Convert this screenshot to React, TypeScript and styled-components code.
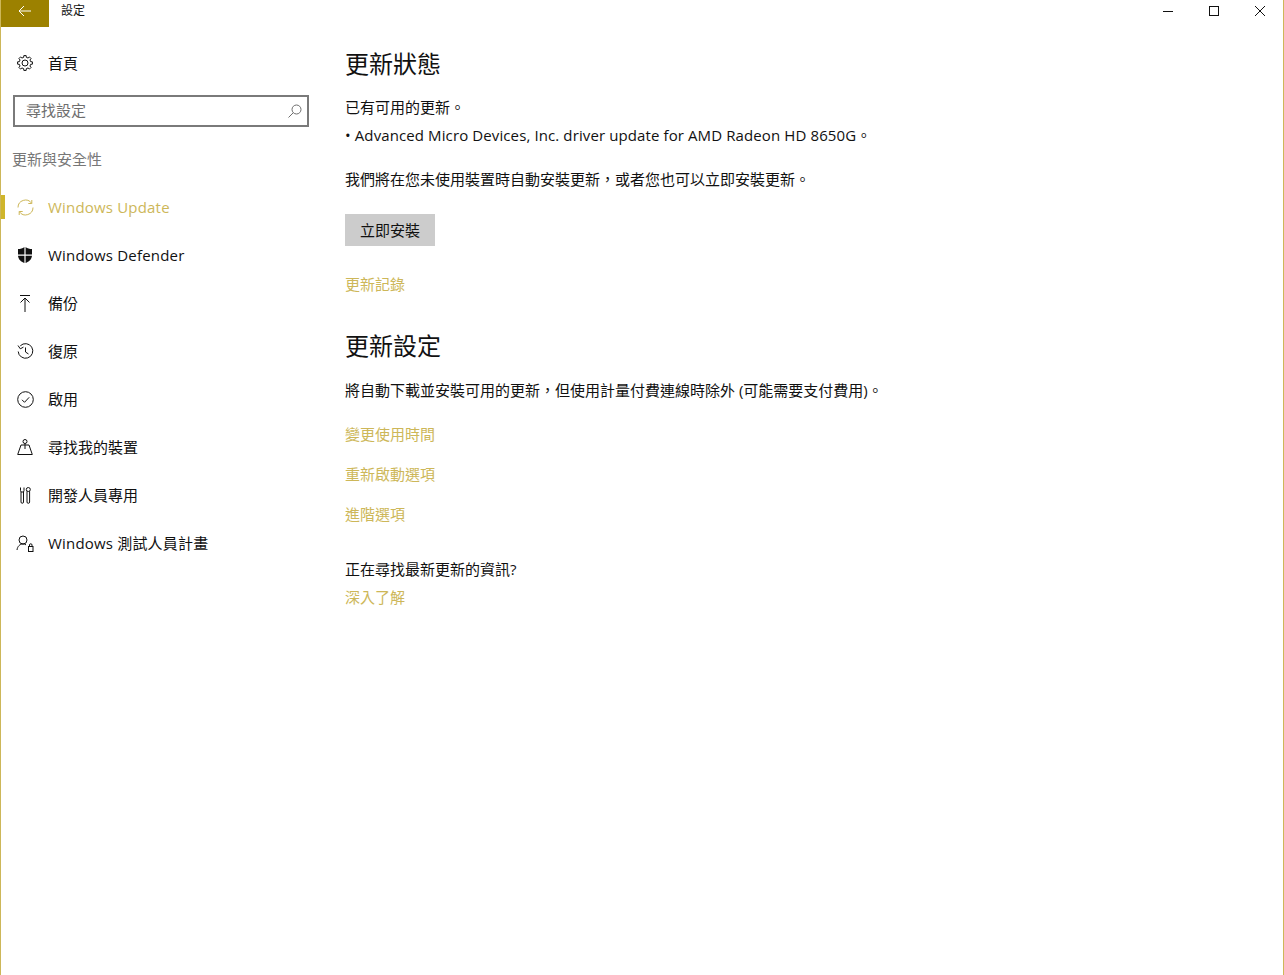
import React from "react";
import styled, { createGlobalStyle } from "styled-components";

const GlobalStyle = createGlobalStyle`
  html, body {
    margin: 0;
    padding: 0;
    background: #fff;
  }
  body {
    font-family: "Open Sans", "Noto Sans CJK TC", sans-serif;
    color: #111;
  }
`;

const ACCENT = "#cdb759";

const Window = styled.div`
  width: 1284px;
  height: 975px;
  box-sizing: border-box;
  border-left: 1px solid ${ACCENT};
  border-right: 1px solid ${ACCENT};
  overflow: hidden;
  display: flex;
  flex-direction: column;
`;

const TitleBar = styled.div`
  height: 27px;
  display: flex;
  align-items: flex-start;
`;

const BackButton = styled.div`
  width: 48px;
  height: 27px;
  background: #9c8100;
  display: flex;
  align-items: center;
  justify-content: center;
  padding-bottom: 5px;
  box-sizing: border-box;
`;

const TitleText = styled.div`
  margin-left: 12px;
  font-size: 12px;
  line-height: 22px;
  flex: 1;
`;

const WindowControls = styled.div`
  display: flex;
  height: 21px;
`;

const ControlButton = styled.div`
  width: 46px;
  display: flex;
  align-items: center;
  justify-content: center;
`;

const Body = styled.div`
  display: flex;
  flex: 1;
`;

const Sidebar = styled.nav`
  width: 344px;
  flex-shrink: 0;
`;

const HomeRow = styled.div`
  height: 48px;
  margin-top: 12px;
  display: flex;
  align-items: center;
  font-size: 15px;
`;

const IconSlot = styled.span`
  width: 48px;
  margin-right: -1px;
  display: flex;
  align-items: center;
  justify-content: center;
  flex-shrink: 0;
`;

const Label = styled.span<{ $raised?: boolean; $spaced?: boolean }>`
  padding-bottom: ${(p) => (p.$raised ? 2 : 0)}px;
  letter-spacing: ${(p) => (p.$spaced ? 0.19 : 0)}px;
`;

const SearchBox = styled.div`
  width: 296px;
  height: 32px;
  margin: 8px 0 0 12px;
  box-sizing: border-box;
  border: 2px solid #7a7a7a;
  display: flex;
  align-items: center;
  justify-content: space-between;
  padding: 0 5px 0 11px;
  font-size: 15px;
  color: #6e6e6e;
`;

const SearchText = styled.span`
  padding-bottom: 4px;
`;

const GroupLabel = styled.div`
  margin: 20px 0 0 11px;
  font-size: 15px;
  line-height: 24px;
  color: #777;
`;

const NavList = styled.div`
  margin-top: 12px;
  display: flex;
  flex-direction: column;
`;

const NavItem = styled.div<{ $active?: boolean }>`
  height: 48px;
  display: flex;
  align-items: center;
  position: relative;
  font-size: 15px;
  color: ${(p) => (p.$active ? ACCENT : "#111")};
  ${(p) =>
    p.$active &&
    `&::before {
      content: "";
      position: absolute;
      left: 0;
      top: 12px;
      width: 4px;
      height: 24px;
      background: #cfb52b;
    }`}
`;

const Content = styled.main`
  display: flex;
  flex-direction: column;
  align-items: flex-start;
  padding-top: 17px;
`;

const Heading = styled.h2<{ $top?: number }>`
  margin: ${(p) => p.$top ?? 0}px 0 0;
  font-size: 24px;
  font-weight: 400;
  line-height: 40px;
`;

const Text = styled.p<{ $top: number }>`
  margin: ${(p) => p.$top}px 0 0;
  font-size: 15px;
  line-height: 20px;
  white-space: nowrap;
`;

const BulletText = styled(Text)`
  letter-spacing: 0.11px;
`;

const InstallButton = styled.div`
  width: 90px;
  height: 32px;
  margin-top: 25px;
  padding-bottom: 2px;
  box-sizing: border-box;
  background: #cccccc;
  display: flex;
  align-items: center;
  justify-content: center;
  font-size: 15px;
`;

const LinkText = styled.div<{ $top: number }>`
  margin-top: ${(p) => p.$top}px;
  font-size: 15px;
  line-height: 20px;
  color: ${ACCENT};
`;

const Stroke = styled.svg.attrs({
  fill: "none",
  stroke: "currentColor",
  strokeWidth: 1,
})`
  display: block;
`;

// outline of the settings cog: eight flat teeth round a centre at 8,8
const gearPath = (() => {
  const teeth = 8;
  const pts: string[] = [];
  for (let i = 0; i < teeth; i++) {
    const a = (i / teeth) * Math.PI * 2;
    const step = (Math.PI * 2) / teeth;
    [
      [a - step * 0.2, 7.5],
      [a + step * 0.2, 7.5],
      [a + step * 0.3, 5.8],
      [a + step * 0.7, 5.8],
    ].forEach(([t, r]) => {
      pts.push(`${(8 + r * Math.sin(t)).toFixed(2)} ${(8 - r * Math.cos(t)).toFixed(2)}`);
    });
  }
  return `M${pts.join("L")}Z`;
})();

const navItems: {
  label: string;
  icon: React.ReactNode;
  active?: boolean;
  raised?: boolean;
  spaced?: boolean;
}[] = [
  {
    label: "Windows Update",
    active: true,
    spaced: true,
    icon: (
      <Stroke width="17" height="17" viewBox="0 0 17 17">
        <path d="M1 8.500A7.500 7.500 0 0 1 14.600 4.200M16 8.500A7.500 7.500 0 0 1 2.400 12.800" />
        <path d="M14.800 1v3.500h-3.500M2.200 16v-3.500h3.500" />
      </Stroke>
    ),
  },
  {
    label: "Windows Defender",
    spaced: true,
    icon: (
      <svg width="16" height="16" viewBox="0 0 16 16" fill="#111">
        <path d="M8.600 0c1.800 1.400 3.900 2 6.400 2v5.600H8.600zM7.400 0v7.600H1V2c2.500 0 4.600-.6 6.400-2zM1 8.800h6.400V16C4 14.800 1.400 12.600 1 8.800zM8.600 8.800H15C14.600 12.600 12 14.800 8.600 16z" />
      </svg>
    ),
  },
  {
    label: "備份",
    raised: true,
    icon: (
      <Stroke width="12" height="17" viewBox="0 0 12 17">
        <path d="M1 .500h10M6 17V3M1.500 7.500L6 3l4.500 4.500" />
      </Stroke>
    ),
  },
  {
    label: "復原",
    raised: true,
    icon: (
      <Stroke width="17" height="17" viewBox="0 0 17 17">
        <path d="M3.300 2.800A7.300 7.300 0 1 1 1.200 8.500" />
        <path d="M1 2.500l2.300 3.300 3.200-1.700M8.500 4.500v4.500l3 2" />
      </Stroke>
    ),
  },
  {
    label: "啟用",
    raised: true,
    icon: (
      <Stroke width="17" height="17" viewBox="0 0 17 17">
        <circle cx="8.500" cy="8.500" r="7.800" />
        <path d="M5 8.800l2.500 2.500 4.700-5" />
      </Stroke>
    ),
  },
  {
    label: "尋找我的裝置",
    raised: true,
    icon: (
      <Stroke width="16" height="16" viewBox="0 0 16 16">
        <circle cx="8" cy="2.500" r="2" />
        <path d="M8 4.500V10M4 6h8l3.300 9.500H.7z" />
      </Stroke>
    ),
  },
  {
    label: "開發人員專用",
    raised: true,
    icon: (
      <Stroke width="11" height="17" viewBox="0 0 11 17">
        <path d="M.5.500v3L1 5h2.500l.5-1.500v-3M1 5v10a1.250 1.250 0 0 0 2.500 0V5" />
        <circle cx="8.300" cy="2.500" r="2" />
        <path d="M7 4.200V15a1.300 1.300 0 0 0 2.600 0V4.200" />
      </Stroke>
    ),
  },
  {
    label: "Windows 測試人員計畫",
    raised: true,
    spaced: true,
    icon: (
      <Stroke width="22" height="17" viewBox="0 0 22 17">
        <circle cx="9" cy="5" r="4" />
        <path d="M3 15c.4-3.500 2.700-6 6-6 1 0 2 .2 3 .8" />
        <rect x="14.500" y="11.500" width="4.500" height="5" />
        <path d="M15.500 11.500V10a1.250 1.250 0 0 1 2.500 0v1.500" />
      </Stroke>
    ),
  },
];

export default function App() {
  return (
    <>
      <GlobalStyle />
      <Window>
        <TitleBar>
          <BackButton>
            <svg width="14" height="12" viewBox="0 0 14 12" fill="none" stroke="#fff" strokeWidth="1">
              <path d="M13 6H1M6 1L1 6l5 5" />
            </svg>
          </BackButton>
          <TitleText>設定</TitleText>
          <WindowControls>
            <ControlButton>
              <svg width="10" height="10" viewBox="0 0 10 10" stroke="#111" strokeWidth="1">
                <path d="M0 5.500h10" />
              </svg>
            </ControlButton>
            <ControlButton>
              <svg width="10" height="10" viewBox="0 0 10 10" fill="none" stroke="#111" strokeWidth="1">
                <rect x=".5" y=".5" width="9" height="9" />
              </svg>
            </ControlButton>
            <ControlButton>
              <svg width="10" height="10" viewBox="0 0 10 10" stroke="#111" strokeWidth="1">
                <path d="M0 0l10 10M10 0L0 10" />
              </svg>
            </ControlButton>
          </WindowControls>
        </TitleBar>
        <Body>
          <Sidebar>
            <HomeRow>
              <IconSlot>
                <Stroke width="16" height="16" viewBox="0 0 16 16">
                  <path d={gearPath} />
                  <circle cx="8" cy="8" r="3" />
                </Stroke>
              </IconSlot>
              <Label $raised>首頁</Label>
            </HomeRow>
            <SearchBox>
              <SearchText>尋找設定</SearchText>
              <svg width="14" height="14" viewBox="0 0 14 14" fill="none" stroke="#6e6e6e" strokeWidth="1">
                <circle cx="8.500" cy="5.500" r="4.500" />
                <path d="M5.300 8.700L.5 13.500" />
              </svg>
            </SearchBox>
            <GroupLabel>更新與安全性</GroupLabel>
            <NavList>
              {navItems.map((item) => (
                <NavItem key={item.label} $active={item.active}>
                  <IconSlot>{item.icon}</IconSlot>
                  <Label $raised={item.raised} $spaced={item.spaced}>
                    {item.label}
                  </Label>
                </NavItem>
              ))}
            </NavList>
          </Sidebar>
          <Content>
            <Heading>更新狀態</Heading>
            <Text $top={13}>已有可用的更新。</Text>
            <BulletText $top={8}>• Advanced Micro Devices, Inc. driver update for AMD Radeon HD 8650G。</BulletText>
            <Text $top={24}>我們將在您未使用裝置時自動安裝更新，或者您也可以立即安裝更新。</Text>
            <InstallButton>立即安裝</InstallButton>
            <LinkText $top={28}>更新記錄</LinkText>
            <Heading $top={32}>更新設定</Heading>
            <Text $top={14}>將自動下載並安裝可用的更新，但使用計量付費連線時除外 (可能需要支付費用)。</Text>
            <LinkText $top={24}>變更使用時間</LinkText>
            <LinkText $top={20}>重新啟動選項</LinkText>
            <LinkText $top={20}>進階選項</LinkText>
            <Text $top={35}>正在尋找最新更新的資訊?</Text>
            <LinkText $top={8}>深入了解</LinkText>
          </Content>
        </Body>
      </Window>
    </>
  );
}
